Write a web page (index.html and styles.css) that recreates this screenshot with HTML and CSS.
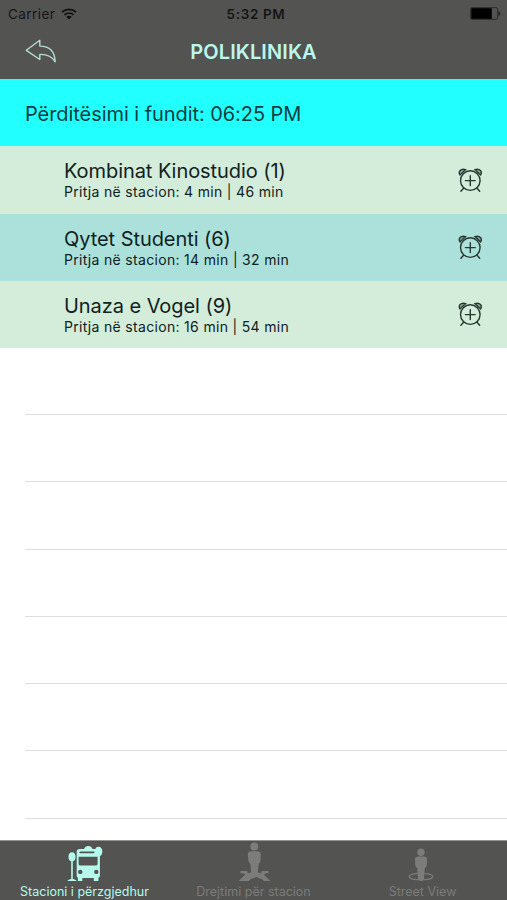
FILE: index.html
```html
<!DOCTYPE html>
<html lang="sq">
<head>
    <meta charset="UTF-8">
    <meta name="viewport" content="width=device-width, initial-scale=1.0">
    <title>Poliklinika</title>
    <link rel="stylesheet" href="styles.css">
</head>
<body>
    <!-- shared icons -->
    <svg class="icon-defs" width="0" height="0">
        <symbol id="alarm" viewBox="0 0 26 26">
            <g fill="none" stroke="currentColor" stroke-width="1.4" stroke-linecap="round">
                <circle cx="13.3" cy="13.6" r="9.8"/>
                <path d="M13.3 8.7v9.8M8.4 13.6h9.8M6.6 21.2l-2.7 3M20 21.2l2.7 3"/>
                <path d="M3 8C1 4.800 3.500 1.200 8.600 2.600L3 8zM23.600 8c2-3.200-.5-6.800-5.600-5.400L23.600 8z" fill="currentColor" fill-opacity=".35"/>
            </g>
        </symbol>
    </svg>
    <header class="header">
        <div class="status-bar">
            <div class="carrier">
                <span class="carrier-name">Carrier</span>
                <svg class="wifi" width="16" height="12" viewBox="0 0 16 12">
                    <path d="M1 4.2C5 .5 11 .5 15 4.2M3.5 6.9c2.6-2.3 6.4-2.3 9 0" fill="none" stroke="#111" stroke-width="1.8"/>
                    <path d="M5.2 8.7c1.7-1.4 3.9-1.4 5.6 0L8 11.6z" fill="#111"/>
                </svg>
            </div>
            <span class="clock">5:32 PM</span>
            <svg class="battery" width="31" height="13" viewBox="0 0 31 13">
                <rect x="0.700" y=".7" width="27" height="11.6" rx="1.5" fill="none" stroke="#2b2b2a"/>
                <rect x="1.300" y="1.2" width="20.5" height="10.6" fill="#000"/>
                <path d="M28.500 4.200c2.400.6 2.400 4 0 4.600z" fill="#222"/>
            </svg>
        </div>
        <div class="nav-bar">
            <svg class="back" width="32" height="26" viewBox="0 0 32 26">
                <path d="M1.3 11.3L14.8 1.3v5.800C24.500 7.100 29.800 12.500 30.200 22.800 26.500 16.500 21.500 15.200 14.800 15.400V20.500z" fill="none" stroke="#b5dcd4" stroke-width="1.400" stroke-linejoin="round"/>
            </svg>
            <h1 class="title">POLIKLINIKA</h1>
        </div>
    </header>
    <main class="list">
        <div class="updated">Përditësimi i fundit: 06:25 PM</div>
        <div class="row">
            <div class="info">
                <div class="line-name">Kombinat Kinostudio (1)</div>
                <div class="wait">Pritja në stacion: 4 min | 46 min</div>
            </div>
            <svg class="alarm" width="26" height="26"><use href="#alarm"/></svg>
        </div>
        <div class="row row-alt">
            <div class="info">
                <div class="line-name">Qytet Studenti (6)</div>
                <div class="wait">Pritja në stacion: 14 min | 32 min</div>
            </div>
            <svg class="alarm" width="26" height="26"><use href="#alarm"/></svg>
        </div>
        <div class="row">
            <div class="info">
                <div class="line-name">Unaza e Vogel (9)</div>
                <div class="wait">Pritja në stacion: 16 min | 54 min</div>
            </div>
            <svg class="alarm" width="26" height="26"><use href="#alarm"/></svg>
        </div>
        <div class="empty"></div>
        <div class="empty"></div>
        <div class="empty"></div>
        <div class="empty"></div>
        <div class="empty"></div>
        <div class="empty"></div>
        <div class="empty"></div>
    </main>
    <nav class="tab-bar">
        <div class="tab tab-active">
            <svg class="tab-icon" width="36" height="40" viewBox="0 0 36 40">
                <g fill="currentColor">
                    <ellipse cx="5" cy="15.800" rx="3.500" ry="4.600"/>
                    <path d="M4.200 20h1.600v19H4.200zM.7 39.300l3.500-1.500h1.600l3.500 1.500v.7H.7z"/>
                    <path fill-rule="evenodd" d="M9.700 10.500Q9.900 8 12.700 8h4.300q1.200-3 4.300-3T25.600 8h2.700c.7-2 2.100-2.600 3.700-2.300 4.500.6 4 8.500.9 9.400v20q0 1.400-1.500 1.600v3.300h-4.600v-3H15.300v3h-4.400v-3.300q-1.200-.4-1.200-1.600zM13.300 10.400a.9.900 0 0 0 0 1.800h14V10.400zM11.600 15.800V23q0 1.400 1.400 1.400h16.200q1.400 0 1.400-1.400v-7.200zM13.300 28.700a2.200 2.200 0 1 0 .01 4.400 2.200 2.200 0 0 0 0-4.400zM29.300 28.700a2.200 2.200 0 1 0 .01 4.400 2.200 2.200 0 0 0 0-4.400z"/>
                </g>
            </svg>
            <span class="tab-label">Stacioni i përzgjedhur</span>
        </div>
        <div class="tab">
            <svg class="tab-icon" width="36" height="40" viewBox="0 0 36 40">
                <g fill="currentColor">
                    <circle cx="18.300" cy="5.500" r="4"/>
                    <path d="M11.800 13.500q0-3.300 3.700-3.300h5.600q3.700 0 3.700 3.300l-.3 6.200q-.3 2-1.900 3l-.7 8.300 1.800 1.300 2.600-1.300-1.300-1.100h7.500v2.600l-1.900-.5-2.800 1.600 7.400 7.300h-6.400l-2.700-2.600-5.800-2.200-5.800 2.200-2.700 2.600H1.800l7.400-7.300-2.800-1.600-1.900.5v-2.600H12l-1.300 1.100 2.600 1.300 1.800-1.300-.8-8.300q-1.600-1-1.900-3z"/>
                </g>
            </svg>
            <span class="tab-label">Drejtimi për stacion</span>
        </div>
        <div class="tab">
            <svg class="tab-icon" width="36" height="40" viewBox="0 0 36 40">
                <g fill="currentColor">
                    <circle cx="16" cy="11.300" r="3.700"/>
                    <path d="M9.900 18.600q0-3.200 3.400-3.200h5.400q3.400 0 3.400 3.200l-.4 6q-.3 2-1.900 2.500l-.8 11.200-3 2.200-3-2.200-.8-11.200q-1.600-.5-1.900-2.500z"/>
                </g>
                <path d="M12.500 32.400c-12 .8-11 6.400 3.500 6.400s15.500-5.600 3.500-6.400" fill="none" stroke="currentColor" stroke-width="1.300"/>
            </svg>
            <span class="tab-label">Street View</span>
        </div>
    </nav>
</body>
</html>
```
FILE: styles.css
```css
* {
    box-sizing: border-box;
}
body {
    display: flex;
    flex-direction: column;
    height: 900px;
    margin: 0;
    overflow: hidden;
    background-color: #fff;
    color: #10211f;
    font-family: Inter, "Liberation Sans", sans-serif;
    white-space: nowrap;
}
.icon-defs {
    position: absolute;
}
svg {
    display: block;
    flex-shrink: 0;
}
.header {
    height: 79px;
    flex-shrink: 0;
    background-color: #535351;
}
.status-bar {
    display: grid;
    grid-template-columns: 1fr auto 1fr;
    align-items: center;
    height: 27px;
    padding: 0 6px 0 8px;
    color: #161616;
    font-size: 13.5px;
}
.carrier {
    display: flex;
    align-items: center;
    gap: 6px;
    letter-spacing: 0.45px;
}
.clock {
    margin-left: 3px;
    font-weight: 600;
    letter-spacing: 0.65px;
}
.battery {
    justify-self: end;
}
.nav-bar {
    display: grid;
    grid-template-columns: 1fr auto 1fr;
    align-items: center;
    height: 50px;
    padding: 0 25px;
}
.title {
    margin: 0;
    color: #bcf7eb;
    font-size: 20px;
    font-weight: 600;
    letter-spacing: 0.1px;
}
.list {
    flex: 1;
    min-height: 0;
    overflow: hidden;
}
.updated {
    display: flex;
    align-items: center;
    height: 67.4px;
    padding: 2px 25px 0;
    background-color: #22ffff;
    color: #0b3f42;
    font-size: 20px;
    letter-spacing: -0.06px;
}
.row {
    display: flex;
    align-items: center;
    justify-content: space-between;
    height: 67.2px;
    padding: 0 24px 0 64px;
    background-color: #d3edda;
}
.row-alt {
    background-color: #abe1da;
}
.line-name {
    font-size: 20px;
    line-height: 24px;
    letter-spacing: -0.06px;
}
.wait {
    font-size: 14px;
    line-height: 17px;
    letter-spacing: 0.32px;
}
.alarm {
    color: #26382f;
}
.empty {
    height: 67.25px;
    margin-left: 25px;
    border-bottom: 1px solid #dededf;
}
.tab-bar {
    display: grid;
    grid-template-columns: repeat(3, 1fr);
    flex-shrink: 0;
    height: 60px;
    border-top: 1px solid #939392;
    background-color: #535351;
}
.tab {
    display: flex;
    flex-direction: column;
    align-items: center;
    color: #7c7c7b;
}
.tab-active {
    color: #b5fbed;
}
.tab-label {
    margin-top: 3px;
    font-size: 12.5px;
    line-height: 15px;
}
```
